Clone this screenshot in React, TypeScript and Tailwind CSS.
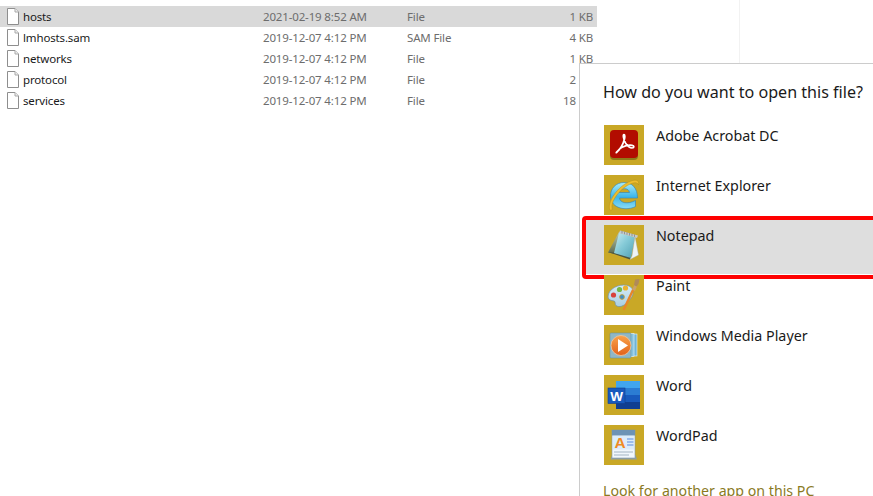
import React from "react";

const files = [
  { name: "hosts", date: "2021-02-19 8:52 AM", type: "File", size: "1 KB", selected: true },
  { name: "lmhosts.sam", date: "2019-12-07 4:12 PM", type: "SAM File", size: "4 KB" },
  { name: "networks", date: "2019-12-07 4:12 PM", type: "File", size: "1 KB" },
  { name: "protocol", date: "2019-12-07 4:12 PM", type: "File", size: "2 KB" },
  { name: "services", date: "2019-12-07 4:12 PM", type: "File", size: "18 KB" },
];

function FileIcon() {
  return (
    <svg width="14" height="17" viewBox="0 0 14 17" className="shrink-0">
      <path d="M1.5 0.5H9L12.5 4V16.5H1.5Z" fill="#ffffff" stroke="#8e8e8e" />
      <path d="M9 0.5V4H12.5" fill="#f0f0f0" stroke="#a8a8a8" />
    </svg>
  );
}

function Acrobat() {
  return (
    <svg width="28" height="30" viewBox="0 0 28 30">
      <rect x="0" y="1" width="28" height="29" rx="4" fill="#8f7a18" />
      <rect x="0" y="0" width="28" height="28" rx="4" fill="#b20c00" />
      <path
        d="M6.500 22.500C9.500 20 13 14.500 14.500 9C15 7 15 4.500 14 4.500C12.800 4.500 13.200 9 15.500 13C17.500 16 19.500 18 22 18C24.500 18 24.500 15.800 22 15.300C18.500 14.800 12.500 16 9.500 19C7.500 21 5.500 23.500 6.500 22.500Z"
        fill="none"
        stroke="#ffffff"
        strokeWidth="1.700"
      />
    </svg>
  );
}

function IE() {
  return (
    <svg width="40" height="40" viewBox="0 0 40 40">
      <defs>
        <linearGradient id="ieBlue" x1="0" y1="0" x2="0" y2="1">
          <stop offset="0" stopColor="#a8ecfc" />
          <stop offset="0.55" stopColor="#3cb6ea" />
          <stop offset="1" stopColor="#8adcf6" />
        </linearGradient>
      </defs>
      <path
        d="M20 7.500C28 7.500 33.500 13 33.500 23H15.500C16 28 23.500 29.500 31.500 25.500V31.500C23 36 7 34 6.500 21.500C6.200 13.500 12 7.500 20 7.500ZM15.300 17.500H25.500C25.200 12.500 16 12.300 15.300 17.500Z"
        fill="url(#ieBlue)"
        stroke="#2b7fb8"
        strokeWidth="0.600"
      />
      <path
        d="M6 35C2.500 28.500 13 11 27 6C32.500 4 35.500 5.500 34.500 10C33.800 7.500 31 7.200 27.500 8.500C16.500 12.500 7 26 8 32.500C8.500 35.500 7 36 6 35Z"
        fill="#eebd2e"
        stroke="#b98e16"
        strokeWidth="0.500"
      />
    </svg>
  );
}

function NotepadIcon() {
  return (
    <svg width="40" height="40" viewBox="0 0 40 40">
      <defs>
        <linearGradient id="npBlue" x1="0" y1="0" x2="1" y2="1">
          <stop offset="0" stopColor="#cdecf0" />
          <stop offset="0.45" stopColor="#86cbd8" />
          <stop offset="1" stopColor="#4f9fb2" />
        </linearGradient>
        <linearGradient id="npOlive" x1="0" y1="0" x2="0" y2="1">
          <stop offset="0" stopColor="#b9c8b0" />
          <stop offset="1" stopColor="#5c6a4c" />
        </linearGradient>
      </defs>
      <path d="M4 27.500L15 7L21 9L11 29Z" fill="url(#npOlive)" />
      <path d="M4 27L26 34.500L27 32L9 27.500Z" fill="#4c5640" />
      <path d="M15 8L31 12L27 33L10 28Z" fill="url(#npBlue)" />
      <path d="M31 11.500L34.500 30L26 34.500L28 31Z" fill="#eef3f6" stroke="#9fb0b8" strokeWidth="0.400" />
      <path d="M16 5.500L34 10.500L33 13L15 8Z" fill="#c6cacc" />
      <path d="M18 6V8.500M20.500 6.700V9.200M23 7.400V9.900M25.500 8V10.500M28 8.700V11.200M30.500 9.400V11.900" stroke="#777d80" strokeWidth="0.700" />
    </svg>
  );
}

function PaintIcon() {
  return (
    <svg width="40" height="40" viewBox="0 0 40 40">
      <defs>
        <linearGradient id="ptBody" x1="0" y1="0" x2="0" y2="1">
          <stop offset="0" stopColor="#d6ecf6" />
          <stop offset="1" stopColor="#a9cfe4" />
        </linearGradient>
      </defs>
      <path
        d="M4.500 19C7.500 11 19 8.500 25 11C30 13.500 30 19 27 23L24 27C20 31 15 33 12 30.500C10.500 29 12 26.500 10 26C8 25.500 2.500 25.500 4.500 19Z"
        fill="url(#ptBody)"
        stroke="#6f92ab"
        strokeWidth="0.700"
      />
      <circle cx="9.500" cy="20" r="2.600" fill="#d8423c" />
      <circle cx="15.500" cy="14.500" r="2.600" fill="#76b847" />
      <circle cx="21.500" cy="13" r="2.600" fill="#ecb22e" />
      <circle cx="18" cy="22" r="2.400" fill="#3f8fc8" stroke="#d49a20" strokeWidth="0.800" />
      <path d="M20 34L29 15" stroke="#e8862a" strokeWidth="2.400" strokeLinecap="round" />
      <path d="M28 14.500L30.500 10L33 11.500L31 16Z" fill="#c9a26a" />
      <path d="M30 10L31 4.500L35.500 4L34.500 9L32.500 11.500Z" fill="#b08a58" />
    </svg>
  );
}

function WmpIcon() {
  return (
    <svg width="40" height="40" viewBox="0 0 40 40">
      <defs>
        <linearGradient id="wmpOr" x1="0" y1="0" x2="0" y2="1">
          <stop offset="0" stopColor="#f9a24a" />
          <stop offset="1" stopColor="#e2621a" />
        </linearGradient>
      </defs>
      <rect x="25" y="9" width="8" height="22" fill="#6fb4d6" stroke="#e8f4fa" strokeWidth="0.600" />
      <rect x="22" y="8.500" width="8" height="23" fill="#87c3de" stroke="#e8f4fa" strokeWidth="0.600" />
      <rect x="6" y="8" width="21" height="25" rx="1" fill="#8fb7c6" stroke="#5f8da2" strokeWidth="0.500" />
      <circle cx="17" cy="20.500" r="10" fill="url(#wmpOr)" stroke="#f5c79a" strokeWidth="0.800" />
      <path d="M14 14L24 20.500L14 27Z" fill="#ffffff" />
    </svg>
  );
}

function WordIcon() {
  return (
    <svg width="40" height="40" viewBox="0 0 40 40">
      <rect x="12" y="6" width="24" height="7" fill="#41a5ee" />
      <rect x="12" y="13" width="24" height="7" fill="#2b7cd3" />
      <rect x="12" y="20" width="24" height="7" fill="#185abd" />
      <rect x="12" y="27" width="24" height="7" fill="#103f91" />
      <rect x="4" y="13" width="17" height="15.500" fill="#185abd" stroke="#113f8c" strokeWidth="0.600" />
      <text x="12.500" y="25.500" textAnchor="middle" fontFamily="Liberation Sans, sans-serif" fontWeight="700" fontSize="13.500" fill="#ffffff">
        W
      </text>
    </svg>
  );
}

function WordPadIcon() {
  return (
    <svg width="40" height="40" viewBox="0 0 40 40">
      <path d="M8 30L6.500 34.500H33L31.500 30Z" fill="#8fa0a6" />
      <rect x="8" y="5" width="23" height="28" fill="#f1f7fc" stroke="#8298a6" strokeWidth="0.600" />
      <rect x="8" y="5" width="23" height="5.500" fill="#6d93b5" />
      <rect x="9" y="11" width="21" height="13.500" fill="#dcecfa" />
      <text x="16" y="23" textAnchor="middle" fontFamily="Liberation Sans, sans-serif" fontWeight="700" fontSize="15.500" fill="#f08a24">
        A
      </text>
      <path d="M23 14H29.500M23 17H29.500M23 20H29.500" stroke="#5a8ce0" strokeWidth="1" />
      <path d="M10 27H29M10 30H25" stroke="#a3b4c2" strokeWidth="1" />
    </svg>
  );
}

const apps: { label: string; icon: React.ReactNode; active?: boolean }[] = [
  { label: "Adobe Acrobat DC", icon: <Acrobat /> },
  { label: "Internet Explorer", icon: <IE /> },
  { label: "Notepad", icon: <NotepadIcon />, active: true },
  { label: "Paint", icon: <PaintIcon /> },
  { label: "Windows Media Player", icon: <WmpIcon /> },
  { label: "Word", icon: <WordIcon /> },
  { label: "WordPad", icon: <WordPadIcon /> },
];

export default function App() {
  return (
    <div className="relative flex h-[496px] w-full overflow-hidden bg-white font-['Noto_Sans',sans-serif]">
      <div className="w-[597px] shrink-0 pt-[6px]">
        {files.map((f) => (
          <div
            key={f.name}
            className={`flex h-[21px] items-center text-[11.5px] tracking-[-0.15px] ${f.selected ? "bg-[#d9d9d9]" : ""}`}
          >
            <div className="flex w-[263px] shrink-0 items-center gap-[3px] pl-[6px] text-[#1a1a1a]">
              <FileIcon />
              <span>{f.name}</span>
            </div>
            <span className="w-[144px] shrink-0 text-[#6d6d6d]">{f.date}</span>
            <span className="w-[100px] shrink-0 text-[#6d6d6d]">{f.type}</span>
            <span className="w-[86px] shrink-0 text-right text-[#6d6d6d]">{f.size}</span>
          </div>
        ))}
      </div>
      <div className="ml-[142px] h-[63px] w-px bg-[#f2f2f2]" />

      <div className="absolute left-[579px] top-[63px] h-[433px] w-[294px] border-l border-t border-[#cccccc] bg-white">
        <div className="flex h-[56px] items-center whitespace-nowrap pl-[23px] text-[16.1px] text-[#1a1a1a]">
          How do you want to open this file?
        </div>
        {apps.map((a) => (
          <div key={a.label} className="relative flex h-[50px] pl-[24px] pt-[5px]">
            {a.active && <div className="absolute bottom-[-4px] left-[4px] right-0 top-0 bg-[#dedede]" />}
            <div className="relative flex h-[40px] w-[40px] shrink-0 items-center justify-center bg-[#c9a826]">
              {a.icon}
            </div>
            <span className="relative ml-[12px] mt-[1px] whitespace-nowrap text-[14.3px] leading-[20px] text-[#1a1a1a]">
              {a.label}
            </span>
            {a.active && (
              <div className="absolute bottom-[-9px] left-[2px] right-[-4px] top-[-4px] rounded-[4px] border-[4px] border-[#fe0000]" />
            )}
          </div>
        ))}
        <div className="mt-[11px] whitespace-nowrap pl-[23px] text-[14.2px] leading-[20px] text-[#8a7a1f]">
          Look for another app on this PC
        </div>
      </div>
    </div>
  );
}
